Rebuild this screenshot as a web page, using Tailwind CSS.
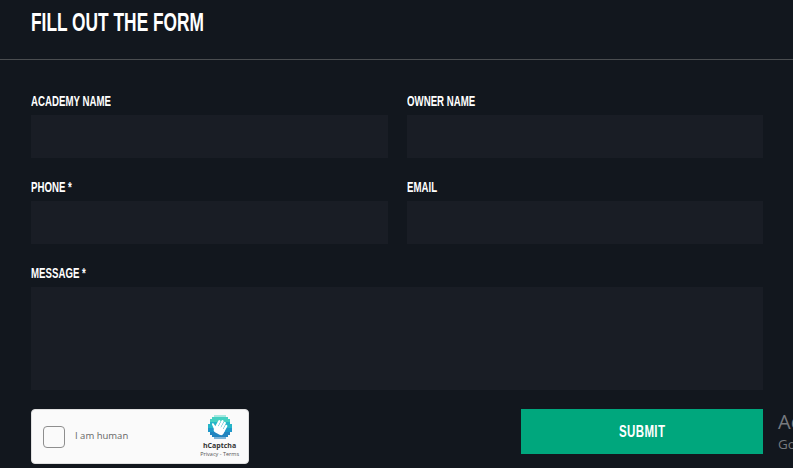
<!DOCTYPE html>
<html lang="en">
<head>
  <meta charset="UTF-8">
  <title>Fill out the form</title>
  <script src="https://cdn.jsdelivr.net/npm/@tailwindcss/browser@4"></script>
</head>
<body class="bg-[#12171e] text-white h-[468px] overflow-hidden font-['Liberation_Sans',sans-serif]">

  <div class="h-[60px] border-b border-[#4a4d50] px-[31px] pt-[6px]">
    <h1 class="inline-block origin-left scale-x-[0.68] whitespace-nowrap text-[25.500px] leading-[32px] font-bold">FILL OUT THE FORM</h1>
  </div>

  <form class="pl-[31px] pr-[30px] pt-[32px] relative">
    <div class="grid grid-cols-[357px_356px] gap-x-[19px] gap-y-[20px]">
      <div>
        <label class="block origin-left scale-x-[0.645] whitespace-nowrap text-[15px] leading-[18px] mb-[5px] font-bold">ACADEMY NAME</label>
        <input type="text" class="block w-full h-[43px] bg-[#191d25]">
      </div>
      <div>
        <label class="block origin-left scale-x-[0.645] whitespace-nowrap text-[15px] leading-[18px] mb-[5px] font-bold">OWNER NAME</label>
        <input type="text" class="block w-full h-[43px] bg-[#191d25]">
      </div>
      <div>
        <label class="block origin-left scale-x-[0.645] whitespace-nowrap text-[15px] leading-[18px] mb-[5px] font-bold">PHONE *</label>
        <input type="text" class="block w-full h-[43px] bg-[#191d25]">
      </div>
      <div>
        <label class="block origin-left scale-x-[0.645] whitespace-nowrap text-[15px] leading-[18px] mb-[5px] font-bold">EMAIL</label>
        <input type="text" class="block w-full h-[43px] bg-[#191d25]">
      </div>
      <div class="col-span-2">
        <label class="block origin-left scale-x-[0.645] whitespace-nowrap text-[15px] leading-[18px] mb-[5px] font-bold">MESSAGE *</label>
        <textarea class="block w-full h-[103px] bg-[#191d25] resize-none"></textarea>
      </div>
    </div>

    <div class="flex justify-between items-start mt-[19px]">
      <div class="w-[218px] h-[55px] bg-[#fafafa] border border-[#e0e0e0] rounded-[4px] flex items-center pl-[11px] pr-[9px] font-['Open_Sans',sans-serif]">
        <div class="w-[22px] h-[22px] bg-[#fafafa] border border-[#8e8e8e] rounded-[4px]"></div>
        <span class="ml-[10px] text-[9.500px] text-[#666666]">I am human</span>
        <div class="ml-auto flex flex-col items-center">
          <svg class="w-[24px] h-[26px]" viewBox="0 0 24 26">
            <path fill="#a5e8e0" d="M6 0h12v2H6z"/>
            <path fill="#45d0c2" d="M4 2h16v2h2v3H2V4h2z"/>
            <path fill="#25b6c8" d="M2 7h20v2h2v4H0V9h2z"/>
            <path fill="#1f98c9" d="M0 13h24v4H0z"/>
            <path fill="#2385c0" d="M2 17h20v3h-2v2H4v-2H2z"/>
            <path fill="#7fb4d8" d="M6 22h12v2H6z"/>
            <g transform="rotate(28 12 12)" fill="#ffffff">
              <rect x="7.500" y="6" width="2.400" height="9" rx="1.200"/>
              <rect x="10.300" y="4.500" width="2.400" height="10" rx="1.200"/>
              <rect x="13.100" y="5" width="2.400" height="10" rx="1.200"/>
              <rect x="15.900" y="7" width="2.300" height="8" rx="1.150"/>
              <rect x="7.500" y="12" width="10.700" height="7" rx="3"/>
              <path d="M8 17 3.800 13.600c-.9-.8.100-2.100 1.100-1.500L8.500 14z"/>
            </g>
          </svg>
          <span class="text-[7px] leading-[9px] font-bold text-[#333333] whitespace-nowrap">hCaptcha</span>
          <span class="text-[5.500px] leading-[9px] text-[#555555] whitespace-nowrap">Privacy - Terms</span>
        </div>
      </div>
      <button type="button" class="w-[242px] h-[45px] bg-[#00a77d] font-bold">
        <span class="inline-block scale-x-[0.72] text-[16px] tracking-[0.5px]">SUBMIT</span>
      </button>
    </div>

    <!-- windows activation watermark, cut off by the page edge -->
    <div class="absolute left-[778px] top-[349px] whitespace-nowrap text-[#777a7e] font-['Open_Sans',sans-serif]">
      <div class="text-[20px] leading-[26px]">Activate Windows</div>
      <div class="text-[13.500px] leading-[18px]">Go to Settings to activate Windows.</div>
    </div>
  </form>

</body>
</html>
